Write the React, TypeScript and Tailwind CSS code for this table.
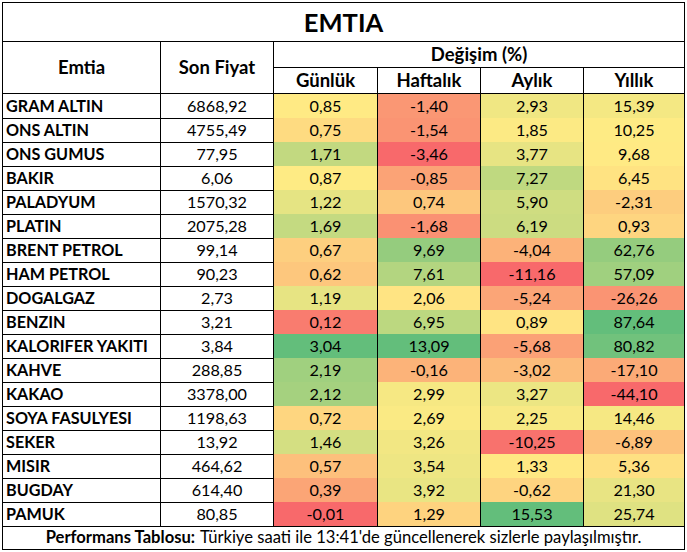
const rows: [string, string, number[]][] = [
  ["GRAM ALTIN", "6868,92", [0.85, -1.4, 2.93, 15.39]],
  ["ONS ALTIN", "4755,49", [0.75, -1.54, 1.85, 10.25]],
  ["ONS GUMUS", "77,95", [1.71, -3.46, 3.77, 9.68]],
  ["BAKIR", "6,06", [0.87, -0.85, 7.27, 6.45]],
  ["PALADYUM", "1570,32", [1.22, 0.74, 5.9, -2.31]],
  ["PLATIN", "2075,28", [1.69, -1.68, 6.19, 0.93]],
  ["BRENT PETROL", "99,14", [0.67, 9.69, -4.04, 62.76]],
  ["HAM PETROL", "90,23", [0.62, 7.61, -11.16, 57.09]],
  ["DOGALGAZ", "2,73", [1.19, 2.06, -5.24, -26.26]],
  ["BENZIN", "3,21", [0.12, 6.95, 0.89, 87.64]],
  ["KALORIFER YAKITI", "3,84", [3.04, 13.09, -5.68, 80.82]],
  ["KAHVE", "288,85", [2.19, -0.16, -3.02, -17.1]],
  ["KAKAO", "3378,00", [2.12, 2.99, 3.27, -44.1]],
  ["SOYA FASULYESI", "1198,63", [0.72, 2.69, 2.25, 14.46]],
  ["SEKER", "13,92", [1.46, 3.26, -10.25, -6.89]],
  ["MISIR", "464,62", [0.57, 3.54, 1.33, 5.36]],
  ["BUGDAY", "614,40", [0.39, 3.92, -0.62, 21.3]],
  ["PAMUK", "80,85", [-0.01, 1.29, 15.53, 25.74]],
];

const RED = [248, 105, 107];
const YELLOW = [255, 235, 132];
const GREEN = [99, 190, 123];

function mix(a: number[], b: number[], t: number) {
  const c = a.map((v, i) => Math.round(v + (b[i] - v) * t));
  return `rgb(${c[0]},${c[1]},${c[2]})`;
}

// excel style 3-colour scale: min red, median yellow, max green
function scale(col: number) {
  const vals = rows.map((r) => r[2][col]);
  const sorted = [...vals].sort((a, b) => a - b);
  const n = sorted.length;
  const mid = n % 2 ? sorted[(n - 1) / 2] : (sorted[n / 2 - 1] + sorted[n / 2]) / 2;
  const min = sorted[0];
  const max = sorted[n - 1];
  return (v: number) =>
    v <= mid ? mix(RED, YELLOW, (v - min) / (mid - min)) : mix(YELLOW, GREEN, (v - mid) / (max - mid));
}

const scales = [0, 1, 2, 3].map(scale);

const fmt = (v: number) => v.toFixed(2).replace(".", ",");

const grid = "grid grid-cols-[158px_113px_104px_103px_103px_100px]";

export default function App() {
  return (
    <div className="p-[2px] bg-white min-h-screen">
      <div className="w-[683px] border border-black text-black font-['Lato',sans-serif] text-[16.2px]">
        <div className="h-[39px] border-b border-black flex items-center justify-center text-[25.5px] font-bold">
          EMTIA
        </div>
        <div className={`${grid} grid-rows-[26px_26px] font-bold text-[18.5px]`}>
          <div className="row-span-2 border-r border-b border-black flex items-center justify-center">Emtia</div>
          <div className="row-span-2 border-r border-b border-black flex items-center justify-center">Son Fiyat</div>
          <div className="col-span-4 border-b border-black flex items-center justify-center">Değişim (%)</div>
          <div className="border-r border-b border-black flex items-center justify-center">Günlük</div>
          <div className="border-r border-b border-black flex items-center justify-center">Haftalık</div>
          <div className="border-r border-b border-black flex items-center justify-center">Aylık</div>
          <div className="border-b border-black flex items-center justify-center">Yıllık</div>
        </div>
        {rows.map(([name, price, changes]) => (
          <div key={name} className={`${grid} h-[24px]`}>
            <div className="border-r border-b border-black flex items-center pl-[3px] font-bold">{name}</div>
            <div className="border-r border-b border-black flex items-center justify-center">{price}</div>
            {changes.map((v, i) => (
              <div
                key={i}
                className={`border-b border-black flex items-center justify-center ${i < 3 ? "border-r" : ""}`}
                style={{ backgroundColor: scales[i](v) }}
              >
                {fmt(v)}
              </div>
            ))}
          </div>
        ))}
        <div className="h-[23px] flex items-center justify-center text-[16.6px]">
          <span className="font-bold">Performans Tablosu:</span>
          <span className="ml-[5px]">Türkiye saati ile 13:41'de güncellenerek sizlerle paylaşılmıştır.</span>
        </div>
      </div>
    </div>
  );
}
